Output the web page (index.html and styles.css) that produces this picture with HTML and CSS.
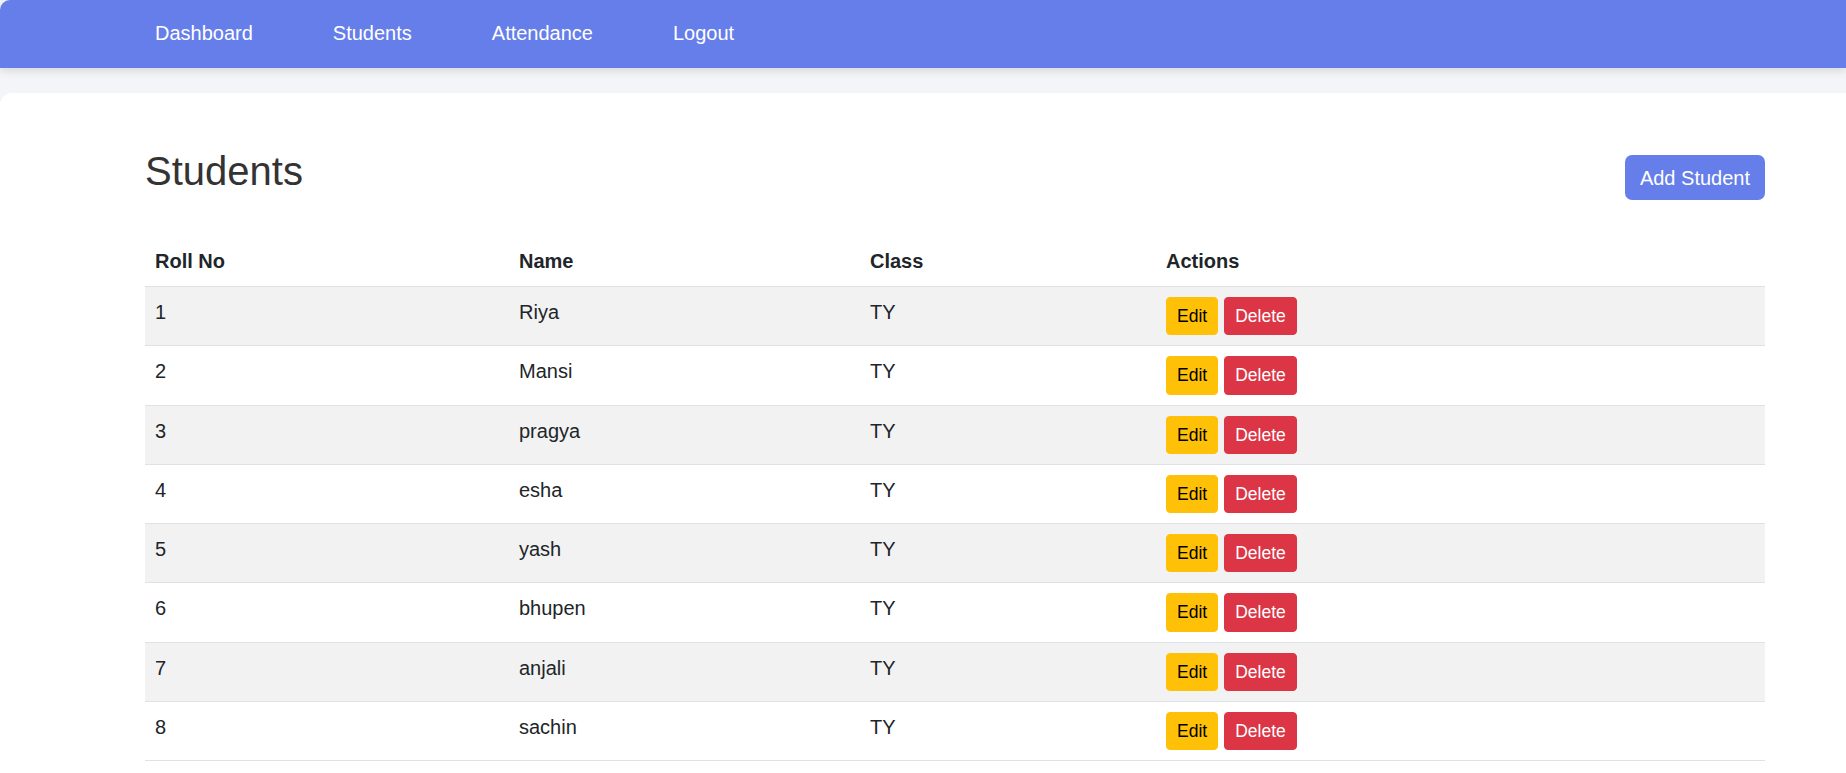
FILE: index.html
```html
<!DOCTYPE html>
<html lang="en">
<head>
<meta charset="utf-8">
<title>Students</title>
<link rel="stylesheet" href="styles.css">
</head>
<body>
<nav class="navbar">
  <a href="#" class="nav-link">Dashboard</a>
  <a href="#" class="nav-link">Students</a>
  <a href="#" class="nav-link">Attendance</a>
  <a href="#" class="nav-link">Logout</a>
</nav>
<main class="card">
  <div class="page-header">
    <h2 class="page-title">Students</h2>
    <a href="#" class="btn btn-primary">Add Student</a>
  </div>
  <table class="table">
    <colgroup>
      <col class="col-roll">
      <col class="col-name">
      <col class="col-class">
      <col class="col-actions">
    </colgroup>
    <thead>
      <tr><th>Roll No</th><th>Name</th><th>Class</th><th>Actions</th></tr>
    </thead>
    <tbody>
      <tr><td>1</td><td>Riya</td><td>TY</td><td><div class="actions"><a href="#" class="btn-sm btn-warning">Edit</a><a href="#" class="btn-sm btn-danger">Delete</a></div></td></tr>
      <tr><td>2</td><td>Mansi</td><td>TY</td><td><div class="actions"><a href="#" class="btn-sm btn-warning">Edit</a><a href="#" class="btn-sm btn-danger">Delete</a></div></td></tr>
      <tr><td>3</td><td>pragya</td><td>TY</td><td><div class="actions"><a href="#" class="btn-sm btn-warning">Edit</a><a href="#" class="btn-sm btn-danger">Delete</a></div></td></tr>
      <tr><td>4</td><td>esha</td><td>TY</td><td><div class="actions"><a href="#" class="btn-sm btn-warning">Edit</a><a href="#" class="btn-sm btn-danger">Delete</a></div></td></tr>
      <tr><td>5</td><td>yash</td><td>TY</td><td><div class="actions"><a href="#" class="btn-sm btn-warning">Edit</a><a href="#" class="btn-sm btn-danger">Delete</a></div></td></tr>
      <tr><td>6</td><td>bhupen</td><td>TY</td><td><div class="actions"><a href="#" class="btn-sm btn-warning">Edit</a><a href="#" class="btn-sm btn-danger">Delete</a></div></td></tr>
      <tr><td>7</td><td>anjali</td><td>TY</td><td><div class="actions"><a href="#" class="btn-sm btn-warning">Edit</a><a href="#" class="btn-sm btn-danger">Delete</a></div></td></tr>
      <tr><td>8</td><td>sachin</td><td>TY</td><td><div class="actions"><a href="#" class="btn-sm btn-warning">Edit</a><a href="#" class="btn-sm btn-danger">Delete</a></div></td></tr>
    </tbody>
  </table>
</main>
</body>
</html>
```
FILE: styles.css
```css
* {
  box-sizing: border-box;
}

html, body {
  overflow-x: hidden;
}

body {
  margin: 0;
  background: #f4f5f9;
  font-family: "Liberation Sans", Arial, sans-serif;
  font-size: 20px;
  line-height: 30px;
  color: #212529;
}

.navbar {
  height: 68px;
  background: #667eea;
  display: flex;
  align-items: center;
  gap: 80px;
  padding-left: 155px;
  padding-bottom: 2px;
  border-top-left-radius: 10px;
  box-shadow: 0 3px 8px rgba(0, 0, 0, 0.12);
  position: relative;
  z-index: 1;
}

.nav-link {
  color: #ffffff;
  text-decoration: none;
  font-size: 20px;
  line-height: 30px;
}

.card {
  margin-top: 25px;
  background: #ffffff;
  border-top-left-radius: 12px;
  padding: 54px 81px 20px 145px;
  min-height: 700px;
}

.page-header {
  display: flex;
  justify-content: space-between;
  align-items: flex-start;
  margin-bottom: 36px;
}

.page-title {
  margin: 0;
  font-size: 40px;
  line-height: 48px;
  font-weight: 400;
  color: #333333;
}

.btn {
  display: inline-block;
  text-decoration: none;
}

.btn-primary {
  margin-top: 8px;
  background: #667eea;
  color: #ffffff;
  font-size: 20px;
  line-height: 30px;
  padding: 7.5px 15px;
  border-radius: 7px;
}

.table {
  width: 100%;
  border-collapse: collapse;
  table-layout: fixed;
}

.col-roll { width: 364px; }
.col-name { width: 351px; }
.col-class { width: 296px; }
.col-actions { width: 609px; }

.table th,
.table td {
  padding: 10px;
  text-align: left;
  vertical-align: top;
  line-height: 30px;
  border-bottom: 1px solid #dee2e6;
}

.table th {
  font-weight: 700;
}

.table tbody tr:nth-child(odd) {
  background: #f2f2f2;
}

.actions {
  display: flex;
  gap: 6px;
}

.btn-sm {
  display: inline-block;
  text-decoration: none;
  font-size: 17.5px;
  line-height: 26.25px;
  padding: 5px 10px;
  border: 1px solid transparent;
  border-radius: 4px;
}

.btn-warning {
  background: #ffc107;
  border-color: #ffc107;
  color: #000000;
}

.btn-danger {
  background: #dc3545;
  border-color: #dc3545;
  color: #ffffff;
}
```
